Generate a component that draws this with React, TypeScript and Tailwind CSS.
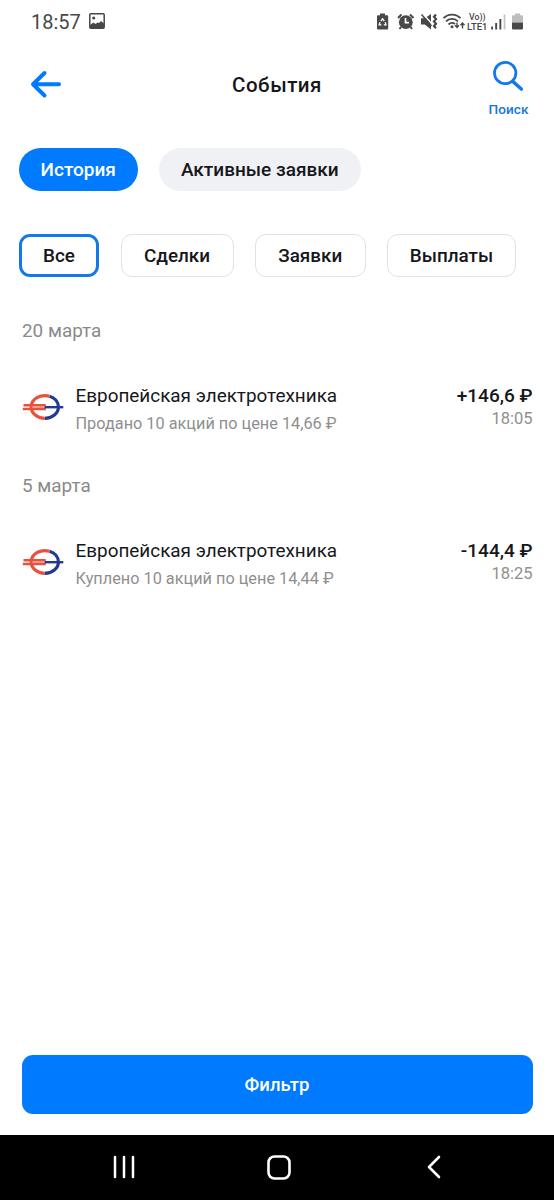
import React from 'react';
import { clsx } from 'clsx';

const tabs = [
  { label: 'История', width: 'w-[118.500px]', active: true },
  { label: 'Активные заявки', width: 'w-[201.500px]', active: false },
];

const filters = [
  { label: 'Все', width: 'w-[80px]', active: true },
  { label: 'Сделки', width: 'w-[113px]', active: false },
  { label: 'Заявки', width: 'w-[110.500px]', active: false },
  { label: 'Выплаты', width: 'w-[129px]', active: false },
];

const groups = [
  { date: '20 марта', title: 'Европейская электротехника', details: 'Продано 10 акций по цене 14,66 ₽', amount: '+146,6 ₽', time: '18:05' },
  { date: '5 марта', title: 'Европейская электротехника', details: 'Куплено 10 акций по цене 14,44 ₽', amount: '-144,4 ₽', time: '18:25' },
];

const StatusIcons = () => (
  <svg width="150" height="20" viewBox="0 0 150 20" fill="#484848" className="mt-px shrink-0">
    {/* power saving battery */}
    <path d="M4 .5h5V2.200h2.200a1 1 0 0 1 1 1V15.500a1 1 0 0 1-1 1H2a1 1 0 0 1-1-1V3.200a1 1 0 0 1 1-1h2z" />
    <path d="M4.900 8 6.600 5.800 8.300 8M9.200 9.300l.8 2.500H7.800M5.400 11.800H3.200L4 9.300" fill="none" stroke="#fff" strokeWidth="1.300" />
    {/* alarm */}
    <circle cx="29.800" cy="9.200" r="6.900" />
    <path d="M22 5 25.500 1.500M37.500 5 34 1.500M25 14 23.500 16M34.500 14 36 16" stroke="#484848" strokeWidth="2" />
    <path d="M29.500 5V9.700H33" fill="none" stroke="#fff" strokeWidth="1.700" />
    {/* vibrate */}
    <path d="M45 5.200h3.800L55 1v15.500l-6.200-5H45z" />
    <path d="M46.800.5 57 12.200" stroke="#fff" strokeWidth="1.500" />
    <path d="M45.500 1.500 55.500 13" stroke="#484848" strokeWidth="1.500" />
    <path d="m60 1.500-2 2.300 2 2.300-2 2.300 2 2.300-2 2.300 2 2.300" fill="none" stroke="#484848" strokeWidth="2.200" />
    {/* wifi */}
    <g fill="none" stroke="#484848" strokeWidth="1.800">
      <path d="M67.500 5.200a11.800 11.800 0 0 1 17 0" />
      <path d="M70 8.400a8.200 8.200 0 0 1 12 0" />
      <path d="M72.500 11.500a5 5 0 0 1 6.500-.5" />
    </g>
    <circle cx="76" cy="13.700" r="1.500" />
    <path d="M81 9.500V14M79 12.200l2 2.300 2-2.300M86.500 15.500V10M84.500 12.300l2-2.300 2 2.300" fill="none" stroke="#484848" strokeWidth="1.400" />
    <g fontFamily="Roboto, sans-serif" fontWeight="500">
      <text x="93" y="7" fontSize="9" textLength="16.500" lengthAdjust="spacingAndGlyphs">Vo))</text>
      <text x="91" y="16.500" fontSize="9.800" textLength="20.500" lengthAdjust="spacingAndGlyphs">LTE1</text>
    </g>
    {/* signal */}
    <rect x="115.200" y="13.500" width="1.800" height="3" />
    <rect x="119.200" y="10" width="1.900" height="6.500" />
    <rect x="123.400" y="6" width="1.900" height="10.500" />
    <rect x="127.700" y="1.500" width="1.700" height="15" fill="#c4c4c4" />
    {/* battery */}
    <path d="M139 .5h5v1.700h2a1 1 0 0 1 1 1V9.500h-11V3.200a1 1 0 0 1 1-1h2z" fill="#bdbdbd" />
    <path d="M136 9.500h11v6a1 1 0 0 1-1 1h-9a1 1 0 0 1-1-1z" />
  </svg>
);

const CompanyLogo = () => (
  <svg width="42" height="30" viewBox="0 0 42 30" fill="none" className="shrink-0">
    <path d="M27.500 4.200C32.800 5.700 36.400 10 36.400 15c0 6.300-6 11.300-13.600 11.300" stroke="#233a94" strokeWidth="3.200" />
    <path d="M27.500 4.200C18.500 1.800 9.200 7 9.200 15c0 6.300 6 11.300 13.600 11.300" stroke="#e8513b" strokeWidth="3.200" />
    <path d="M1.500 13.300h22.300M.8 17h23" stroke="#e8513b" strokeWidth="2.500" />
    <path d="M10 15.200h12" stroke="#ef8b78" strokeWidth="1.200" />
    <path d="M22.500 15.200h18.800" stroke="#233a94" strokeWidth="2.400" />
  </svg>
);

export default function App() {
  return (
    <div className="flex h-[1200px] w-[554px] flex-col bg-white font-['Roboto','Noto_Sans',sans-serif] text-[#16171a]">
      <div className="flex h-[44px] items-center justify-between pl-[31px] pr-[28px]">
        <div className="flex items-center gap-[8px] text-[#484848]">
          <span className="text-[20px] leading-6">18:57</span>
          <svg width="16" height="16" viewBox="0 0 16 16" className="mb-0.5">
            <rect x=".8" y=".8" width="14.400" height="14.400" rx="1" fill="none" stroke="#484848" strokeWidth="1.500" />
            <circle cx="4.700" cy="5" r="1.600" fill="#484848" />
            <path d="M1 12l3.500-2.500 2 1.500 2-1.500L10 10l2-2 3 2.500V15H1z" fill="#484848" />
          </svg>
        </div>
        <StatusIcons />
      </div>

      <header className="grid h-[104px] grid-cols-3 pl-[25px] pr-[25px]">
        <svg width="32" height="30" viewBox="0 0 32 30" className="ml-[4px] mt-[25px]" fill="none" stroke="#007aff" strokeWidth="4" strokeLinecap="round" strokeLinejoin="round">
          <path d="M30 15.300H4M15.500 4 4 15.300l11.500 11.200" />
        </svg>
        <h1 className="mt-[27px] text-center text-[20.500px] font-medium leading-7 tracking-[0.5px]">События</h1>
        <button className="flex w-[41px] flex-col items-center justify-self-end pt-[16px] text-[#1677dc]">
          <svg width="32" height="32" viewBox="0 0 32 32" fill="none" stroke="#1479e8" strokeLinecap="round">
            <circle cx="12.200" cy="13" r="10.700" strokeWidth="2.800" />
            <path d="m20.500 22 7.800 7" strokeWidth="3.600" />
          </svg>
          <span className="mt-[7px] text-[13.600px] font-medium leading-5 tracking-[0.100px]">Поиск</span>
        </button>
      </header>

      <div className="flex gap-[21.500px] pl-[19px]">
        {tabs.map((tab) => (
          <button
            key={tab.label}
            className={clsx('h-[43px] rounded-full pt-px text-[19px] font-medium', tab.width, tab.active ? 'bg-[#007aff] text-white' : 'bg-[#f0f1f5]')}
          >
            {tab.label}
          </button>
        ))}
      </div>

      <div className="mt-[43px] flex gap-[21.500px] pl-[19px]">
        {filters.map((filter) => (
          <button
            key={filter.label}
            className={clsx(
              'h-[43px] rounded-[11px] pt-px text-[18.900px] font-medium',
              filter.width,
              filter.active ? 'border-[3px] border-[#1479e8]' : 'border border-[#e2e2e3]'
            )}
          >
            {filter.label}
          </button>
        ))}
      </div>

      <main className="flex-1 pl-[22px] pr-[21.500px] pt-[40px]">
        {groups.map((group) => (
          <section key={group.date} className="h-[155px]">
            <h2 className="text-[18.900px] leading-7 text-[#8a8a8a]">{group.date}</h2>
            <div className="mt-[37px] flex">
              <div className="mt-[10px]">
                <CompanyLogo />
              </div>
              <div className="ml-[11.500px] flex-1">
                <p className="whitespace-nowrap text-[18.900px] leading-7">{group.title}</p>
                <p className="whitespace-nowrap text-[16.300px] leading-7 text-[#8f8f8f]">{group.details}</p>
              </div>
              <div className="text-right">
                <p className="text-[19px] font-medium leading-7">{group.amount}</p>
                <p className="text-[16.500px] leading-[18px] text-[#8f8f8f]">{group.time}</p>
              </div>
            </div>
          </section>
        ))}
      </main>

      <div className="px-[21.500px] pb-[21px]">
        <button className="h-[59px] w-full rounded-[11px] bg-[#007aff] pt-0.5 text-[18.500px] font-medium text-white">Фильтр</button>
      </div>

      <nav className="flex h-[65px] items-center justify-between bg-black pb-px pl-[112px] pr-[112px]">
        <svg width="24" height="24" viewBox="0 0 24 24" stroke="#fff" strokeWidth="2.500" strokeLinecap="round">
          <path d="M3 2v20M12 2v20M21 2v20" />
        </svg>
        <svg width="24" height="25" viewBox="0 0 24 25" fill="none" stroke="#fff" strokeWidth="2.600" className="-ml-1">
          <rect x="1.500" y="1.500" width="21" height="22" rx="6" />
        </svg>
        <svg width="16" height="24" viewBox="0 0 16 24" fill="none" stroke="#fff" strokeWidth="2.600" strokeLinecap="round" strokeLinejoin="round">
          <path d="M13 2 3 12l10 10" />
        </svg>
      </nav>
    </div>
  );
}
